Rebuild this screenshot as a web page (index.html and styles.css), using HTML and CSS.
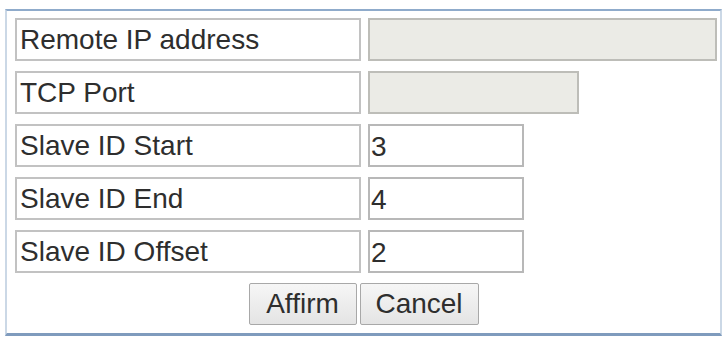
FILE: index.html
```html
<!DOCTYPE html>
<html lang="en">
<head>
    <meta charset="UTF-8">
    <meta name="viewport" content="width=device-width, initial-scale=1.0">
    <title>Modbus Gateway Settings</title>
    <link rel="stylesheet" href="styles.css">
</head>
<body>
    <!-- Panel de configuración -->
    <div class="panel">
        <div class="form-grid">
            <div class="label">Remote IP address</div>
            <div class="field"><input type="text" class="input input-wide" disabled></div>

            <div class="label">TCP Port</div>
            <div class="field"><input type="text" class="input input-mid" disabled></div>

            <div class="label">Slave ID Start</div>
            <div class="field"><input type="text" class="input input-short" value="3"></div>

            <div class="label">Slave ID End</div>
            <div class="field"><input type="text" class="input input-short" value="4"></div>

            <div class="label">Slave ID Offset</div>
            <div class="field"><input type="text" class="input input-short" value="2"></div>
        </div>

        <div class="actions">
            <button class="btn btn-affirm">Affirm</button>
            <button class="btn btn-cancel">Cancel</button>
        </div>
    </div>
</body>
</html>
```

FILE: styles.css
```css
body {
    font-family: "Liberation Sans", Arial, sans-serif;
    margin: 0;
    padding: 0;
    background-color: #ffffff;
    color: #2e2e2e;
}

/* Marco principal */
.panel {
    box-sizing: border-box;
    width: 717px;
    height: 327px;
    margin: 9px 0 0 5px;
    padding: 7px 4px 0 8px;
    border-top: 2px solid #8fabcb;
    border-left: 2px solid #cbd8e6;
    border-right: 2px solid #cbd8e6;
    border-bottom: 3px solid #7f9bbd;
}

/* Filas del formulario */
.form-grid {
    display: grid;
    grid-template-columns: 346px 1fr;
    grid-auto-rows: 43px;
    column-gap: 7px;
    row-gap: 10px;
}

.label {
    box-sizing: border-box;
    height: 43px;
    padding: 3px 4px 0 3px;
    border: 2px solid #c2c2c2;
    font-size: 28px;
    line-height: 34px;
    background-color: #ffffff;
}

.field {
    display: flex;
}

.input {
    box-sizing: border-box;
    height: 43px;
    margin: 0;
    padding: 2px 2px 0 1px;
    border: 2px solid #b8b8b8;
    font-family: "Liberation Sans", Arial, sans-serif;
    font-size: 28px;
    color: #2e2e2e;
    background-color: #ffffff;
    outline: none;
}

.input:disabled {
    background-color: #ebebe6;
    border-color: #bdbdb8;
}

.input-wide {
    width: 349px;
}

.input-mid {
    width: 211px;
}

.input-short {
    width: 156px;
}

/* Botones */
.actions {
    display: flex;
    justify-content: center;
    gap: 3px;
    margin-top: 10px;
    padding-right: 4px;
}

.btn {
    box-sizing: border-box;
    height: 42px;
    padding: 0;
    border: 1px solid #a8a8a8;
    border-radius: 2px;
    font-family: "Liberation Sans", Arial, sans-serif;
    font-size: 28px;
    color: #2e2e2e;
    background: linear-gradient(#f6f6f6, #e4e4e4);
    cursor: pointer;
}

.btn-affirm {
    width: 108px;
}

.btn-cancel {
    width: 119px;
}
```
